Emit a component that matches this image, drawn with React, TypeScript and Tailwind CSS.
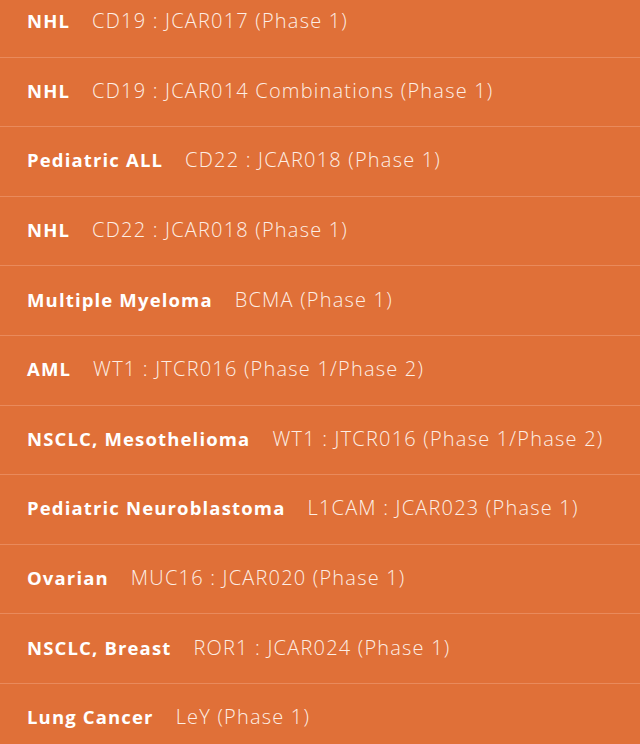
const trials = [
  { label: "NHL", detail: "CD19 : JCAR017 (Phase 1)" },
  { label: "NHL", detail: "CD19 : JCAR014 Combinations (Phase 1)" },
  { label: "Pediatric ALL", detail: "CD22 : JCAR018 (Phase 1)" },
  { label: "NHL", detail: "CD22 : JCAR018 (Phase 1)" },
  { label: "Multiple Myeloma", detail: "BCMA (Phase 1)" },
  { label: "AML", detail: "WT1 : JTCR016 (Phase 1/Phase 2)" },
  { label: "NSCLC, Mesothelioma", detail: "WT1 : JTCR016 (Phase 1/Phase 2)" },
  { label: "Pediatric Neuroblastoma", detail: "L1CAM : JCAR023 (Phase 1)" },
  { label: "Ovarian", detail: "MUC16 : JCAR020 (Phase 1)" },
  { label: "NSCLC, Breast", detail: "ROR1 : JCAR024 (Phase 1)" },
  { label: "Lung Cancer", detail: "LeY (Phase 1)" },
];

export default function App() {
  return (
    <div className="h-[744px] w-[640px] overflow-hidden bg-[#e07038] font-['Open_Sans',sans-serif] text-white">
      <div className="-mt-[12px]">
        {trials.map((t, i) => (
          <div
            key={i}
            className="flex h-[69.6px] items-center border-b border-[#e98a5c] pb-[2px] pl-[27px]"
          >
            <div className="flex items-baseline gap-[22px]">
              <span className="text-[18.5px] font-bold tracking-[1.15px]">{t.label}</span>
              <span className="text-[20px] font-light tracking-[1.2px] text-[#fdeee5]">{t.detail}</span>
            </div>
          </div>
        ))}
      </div>
    </div>
  );
}
